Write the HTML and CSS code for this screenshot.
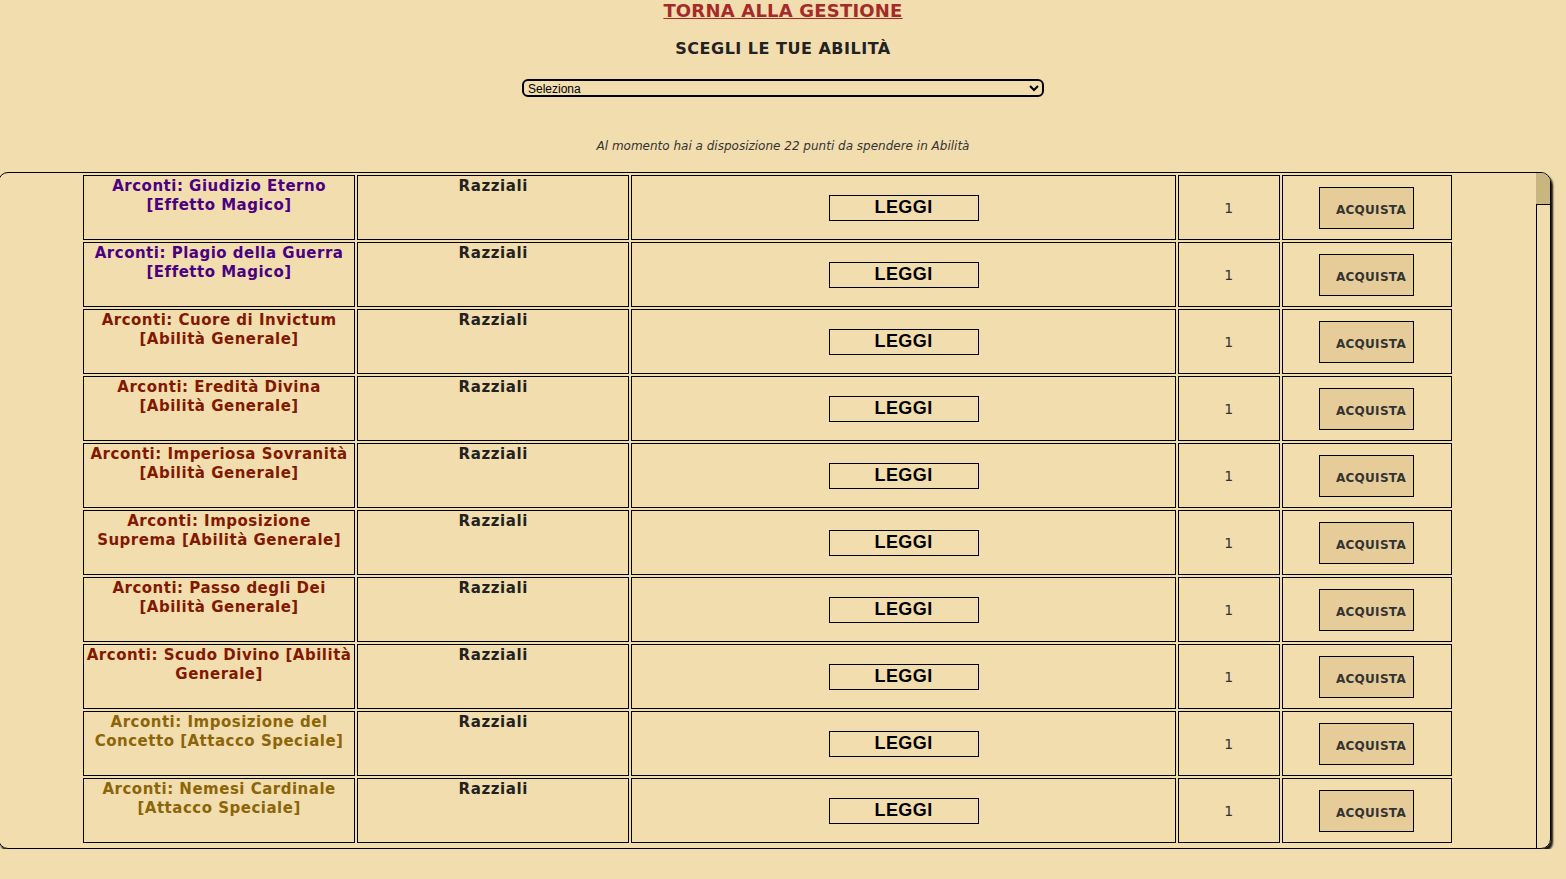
FILE: index.html
```html
<!DOCTYPE html>
<html lang="it">
<head>
    <meta charset="UTF-8">
    <meta name="viewport" content="width=device-width, initial-scale=1.0">
    <title>Scegli le tue abilità</title>
    <link rel="stylesheet" href="styles.css">
</head>
<body>
    <div class="header">
        <a href="#" class="back-link">TORNA ALLA GESTIONE</a>
        <h2 class="title">SCEGLI LE TUE ABILITÀ</h2>
        <select class="picker">
            <option>Seleziona</option>
        </select>
        <p class="points">Al momento hai a disposizione 22 punti da spendere in Abilità</p>
    </div>

    <div class="list">
        <div class="list-body">
            <table class="skills">
                <colgroup>
                    <col class="col-name">
                    <col class="col-kind">
                    <col class="col-read">
                    <col class="col-cost">
                    <col class="col-buy">
                </colgroup>
                <tr>
                    <td class="name magic">Arconti: Giudizio Eterno [Effetto Magico]</td>
                    <td class="kind">Razziali</td>
                    <td class="read"><button class="btn-read">LEGGI</button></td>
                    <td class="cost">1</td>
                    <td class="buy"><button class="btn-buy">ACQUISTA</button></td>
                </tr>
                <tr>
                    <td class="name magic">Arconti: Plagio della Guerra [Effetto Magico]</td>
                    <td class="kind">Razziali</td>
                    <td class="read"><button class="btn-read">LEGGI</button></td>
                    <td class="cost">1</td>
                    <td class="buy"><button class="btn-buy">ACQUISTA</button></td>
                </tr>
                <tr>
                    <td class="name general">Arconti: Cuore di Invictum [Abilità Generale]</td>
                    <td class="kind">Razziali</td>
                    <td class="read"><button class="btn-read">LEGGI</button></td>
                    <td class="cost">1</td>
                    <td class="buy"><button class="btn-buy">ACQUISTA</button></td>
                </tr>
                <tr>
                    <td class="name general">Arconti: Eredità Divina [Abilità Generale]</td>
                    <td class="kind">Razziali</td>
                    <td class="read"><button class="btn-read">LEGGI</button></td>
                    <td class="cost">1</td>
                    <td class="buy"><button class="btn-buy">ACQUISTA</button></td>
                </tr>
                <tr>
                    <td class="name general">Arconti: Imperiosa Sovranità [Abilità Generale]</td>
                    <td class="kind">Razziali</td>
                    <td class="read"><button class="btn-read">LEGGI</button></td>
                    <td class="cost">1</td>
                    <td class="buy"><button class="btn-buy">ACQUISTA</button></td>
                </tr>
                <tr>
                    <td class="name general">Arconti: Imposizione Suprema [Abilità Generale]</td>
                    <td class="kind">Razziali</td>
                    <td class="read"><button class="btn-read">LEGGI</button></td>
                    <td class="cost">1</td>
                    <td class="buy"><button class="btn-buy">ACQUISTA</button></td>
                </tr>
                <tr>
                    <td class="name general">Arconti: Passo degli Dei [Abilità Generale]</td>
                    <td class="kind">Razziali</td>
                    <td class="read"><button class="btn-read">LEGGI</button></td>
                    <td class="cost">1</td>
                    <td class="buy"><button class="btn-buy">ACQUISTA</button></td>
                </tr>
                <tr>
                    <td class="name general">Arconti: Scudo Divino [Abilità Generale]</td>
                    <td class="kind">Razziali</td>
                    <td class="read"><button class="btn-read">LEGGI</button></td>
                    <td class="cost">1</td>
                    <td class="buy"><button class="btn-buy">ACQUISTA</button></td>
                </tr>
                <tr>
                    <td class="name attack">Arconti: Imposizione del Concetto [Attacco Speciale]</td>
                    <td class="kind">Razziali</td>
                    <td class="read"><button class="btn-read">LEGGI</button></td>
                    <td class="cost">1</td>
                    <td class="buy"><button class="btn-buy">ACQUISTA</button></td>
                </tr>
                <tr>
                    <td class="name attack">Arconti: Nemesi Cardinale [Attacco Speciale]</td>
                    <td class="kind">Razziali</td>
                    <td class="read"><button class="btn-read">LEGGI</button></td>
                    <td class="cost">1</td>
                    <td class="buy"><button class="btn-buy">ACQUISTA</button></td>
                </tr>
            </table>
        </div>
        <!-- barra di scorrimento -->
        <div class="rail">
            <div class="thumb"></div>
            <div class="track"></div>
        </div>
    </div>
</body>
</html>
```

FILE: styles.css
```css
body {
    margin: 0;
    padding: 0;
    background-color: #f2ddae;
    font-family: "DejaVu Sans", Verdana, sans-serif;
    overflow: hidden;
}

.header {
    text-align: center;
}

.back-link {
    display: inline-block;
    font-size: 18px;
    line-height: 22px;
    font-weight: bold;
    letter-spacing: 0.2px;
    color: #a52a2a;
    text-decoration: underline;
}

.title {
    margin: 16px 0 0;
    font-size: 16px;
    line-height: 21px;
    letter-spacing: 0.5px;
    color: #222;
}

.picker {
    display: block;
    width: 522px;
    height: 18px;
    margin: 20px auto 0;
    padding: 0;
    border: 2px solid #000;
    border-radius: 6px;
    background: transparent;
    font-family: "Liberation Sans", Arial, sans-serif;
    font-size: 12px;
    color: #000;
}

.points {
    margin: 42px 0 0;
    font-size: 12px;
    font-style: italic;
    color: #333;
}

/* Contenitore della lista */
.list {
    display: flex;
    margin: 19px 15px 0 -2px;
    height: 675px;
    border: 1px solid #000;
    border-radius: 10px;
    box-shadow: 2px 3px 2px rgba(0, 0, 0, 0.9);
    overflow: hidden;
}

.list-body {
    flex: 1;
}

.rail {
    width: 14px;
    display: flex;
    flex-direction: column;
}

.thumb {
    height: 31px;
    background: #c9b57f;
}

.track {
    flex: 1;
    border-top: 1px solid #000;
    border-left: 1px solid #000;
}

.skills {
    width: 1373px;
    margin: 0 auto;
    border-spacing: 2px;
    table-layout: fixed;
}

.col-name { width: 20%; }
.col-kind { width: 20%; }
.col-read { width: 40%; }
.col-cost { width: 7.5%; }
.col-buy  { width: 12.5%; }

.skills td {
    height: 61px;
    padding: 1px;
    border: 1px solid #000;
    text-align: center;
}

.name {
    vertical-align: top;
    font-size: 15px;
    line-height: 19px;
    font-weight: bold;
    letter-spacing: 0.5px;
}

.magic   { color: #4b0082; }
.general { color: #821800; }
.attack  { color: #8b6508; }

.kind {
    vertical-align: top;
    font-size: 15px;
    line-height: 19px;
    font-weight: bold;
    letter-spacing: 0.6px;
    color: #222;
}

.read,
.cost,
.buy {
    vertical-align: middle;
}

.btn-read {
    width: 150px;
    height: 26px;
    padding: 0;
    border: 1px solid #000;
    background: transparent;
    font-family: "Liberation Sans", Arial, sans-serif;
    font-size: 18px;
    font-weight: bold;
    letter-spacing: 0.4px;
    color: #000;
    cursor: pointer;
}

.cost {
    font-size: 14px;
    color: #333;
}

.btn-buy {
    width: 95px;
    height: 42px;
    padding: 5px 0 0 8px;
    border: 1px solid #000;
    background: #e6cc98;
    font-family: "DejaVu Sans", Verdana, sans-serif;
    font-size: 12px;
    font-weight: bold;
    letter-spacing: 0.3px;
    color: #333;
    cursor: pointer;
}
```
